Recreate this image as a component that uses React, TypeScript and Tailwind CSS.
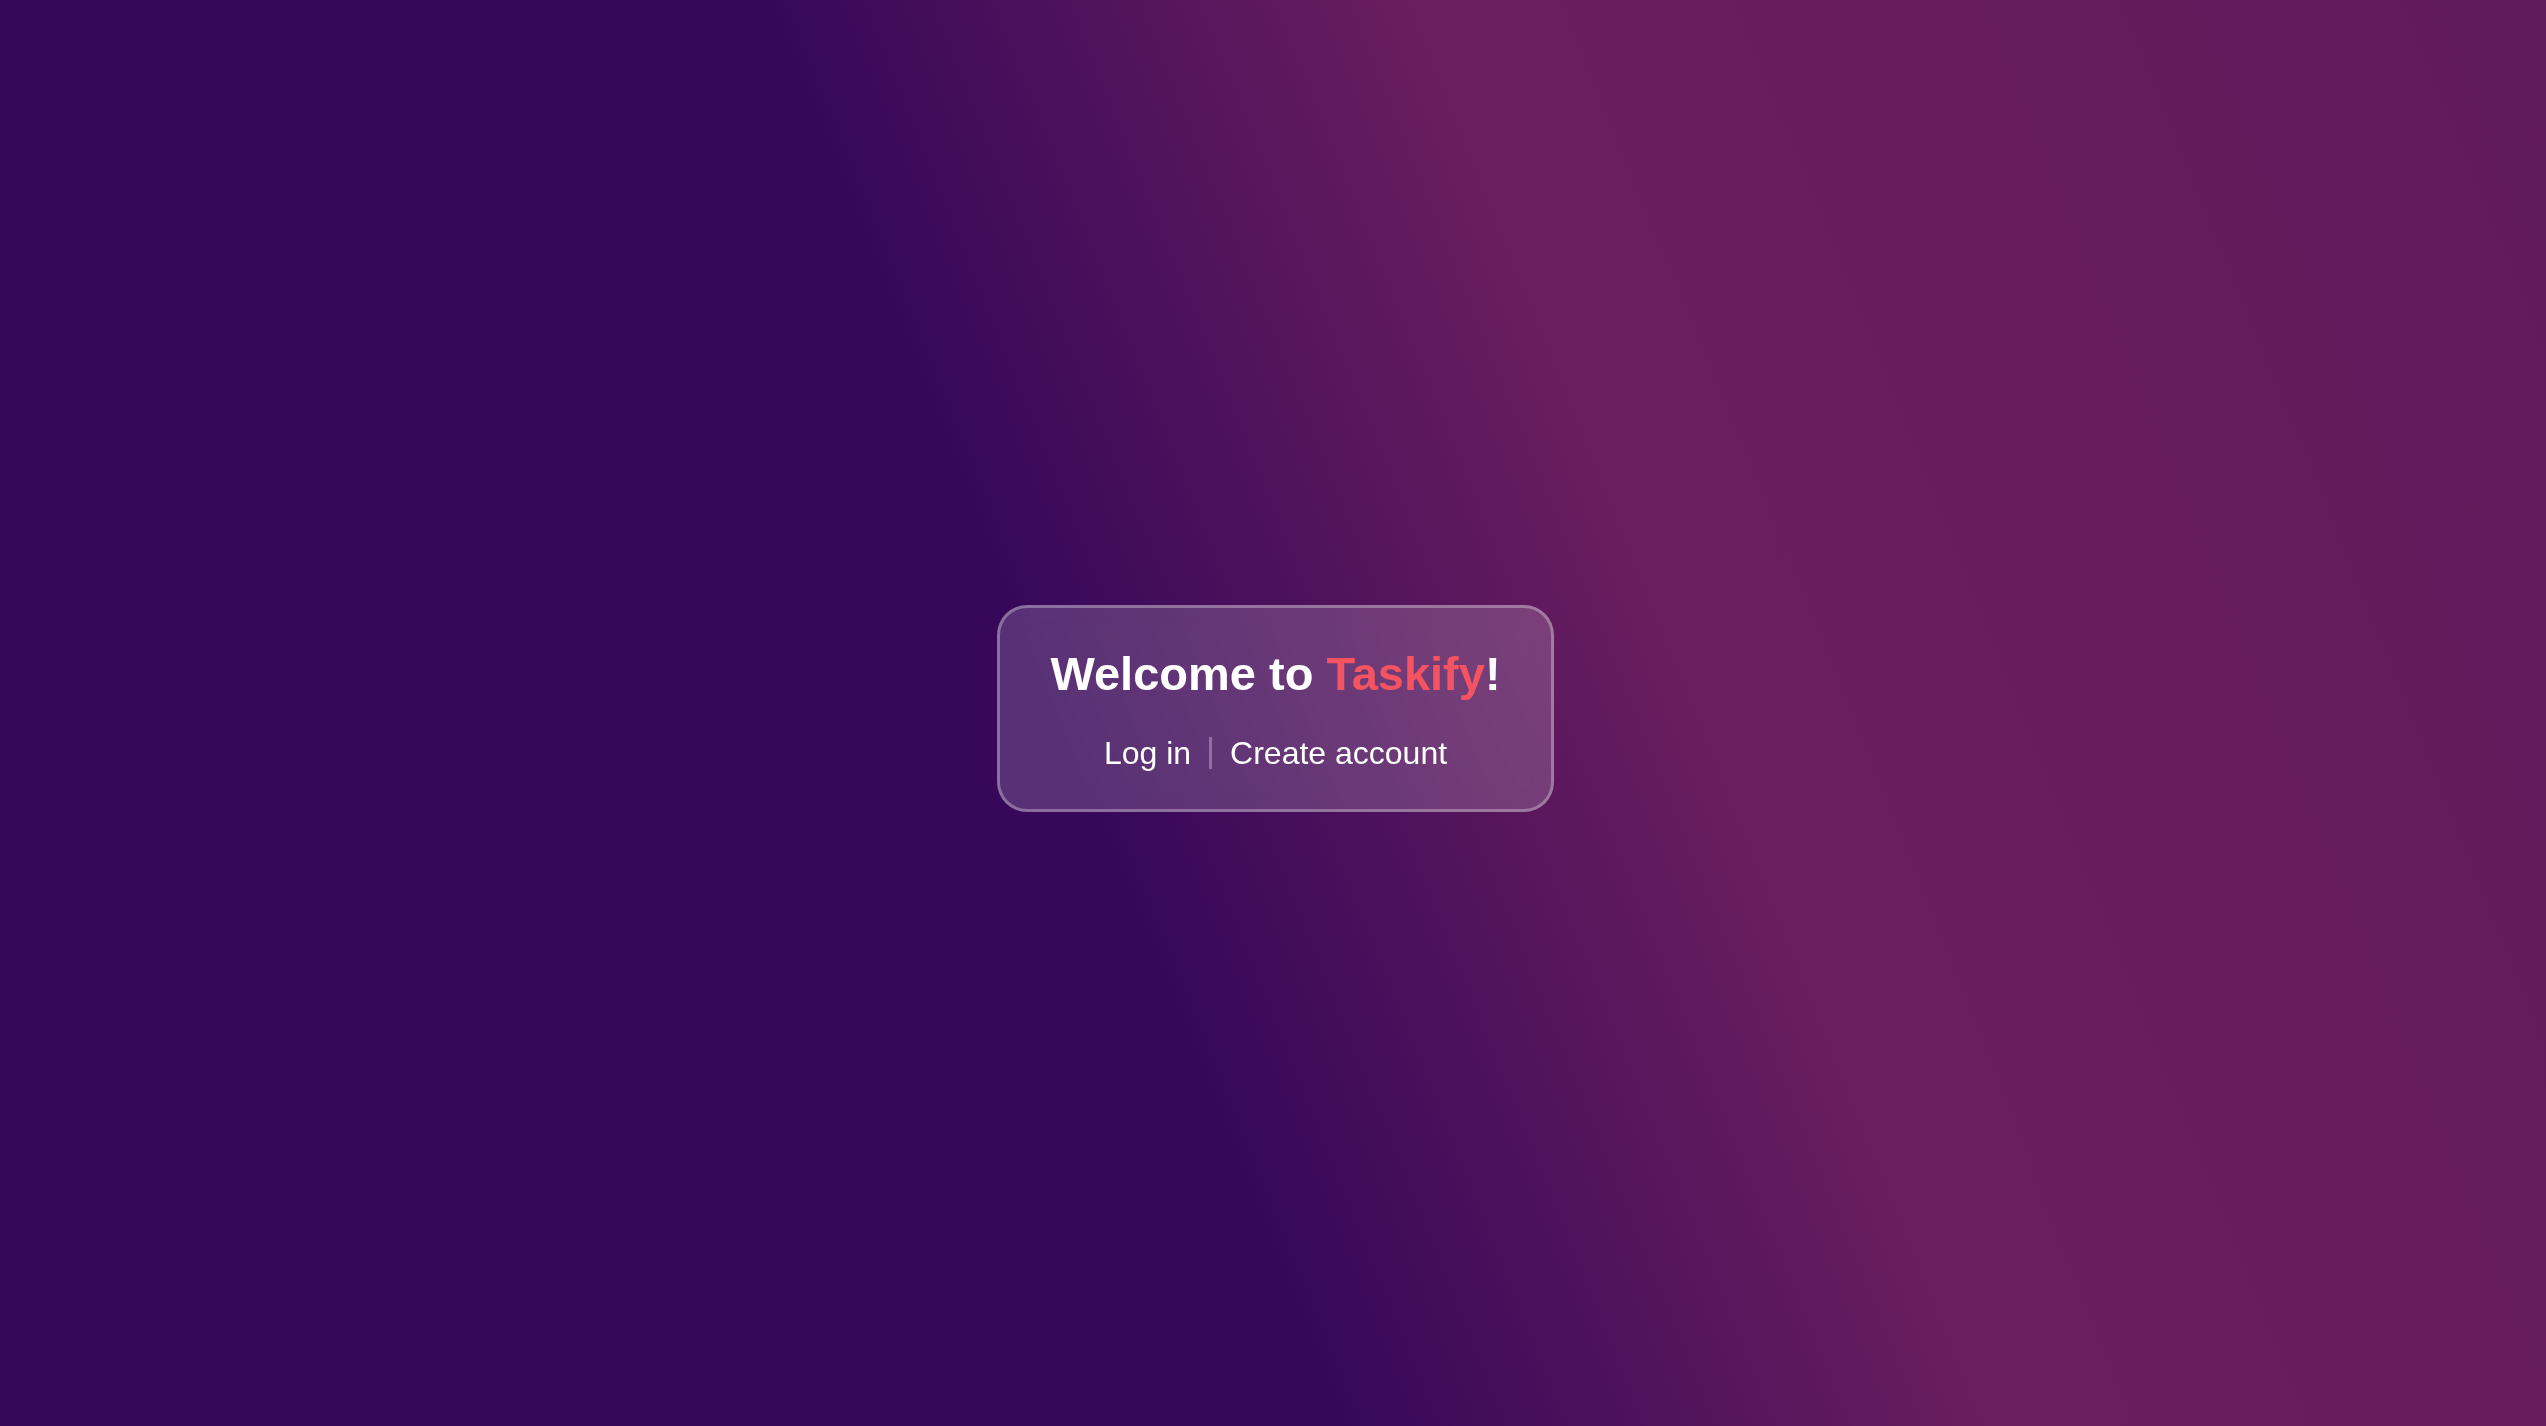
function App() {
    return (
        <div className="flex min-h-screen w-full items-center justify-center bg-[linear-gradient(68deg,#37085a_0%,#37085a_43%,#6a1e5e_64%,#611a5c_100%)] font-['Liberation_Sans',Arial,sans-serif]">
            {/* Welcome card */}
            <div className="mb-[10px] ml-[5px] flex flex-col items-center gap-[34px] rounded-[30px] border-[3px] border-white/30 bg-white/[0.17] px-[50px] pt-[39px] pb-[37px] text-white backdrop-blur-md">
                <h1 className="text-[47px] leading-[54px] font-bold">
                    Welcome to <span className="text-[#f45461]">Taskify</span>!
                </h1>
                <nav className="flex items-center text-[32px] leading-[37px]">
                    <a href="#" className="hover:underline">
                        Log in
                    </a>
                    <span className="mx-[18px] h-8 w-[3px] bg-white/30" />
                    <a href="#" className="hover:underline">
                        Create account
                    </a>
                </nav>
            </div>
        </div>
    );
}

export default App;
